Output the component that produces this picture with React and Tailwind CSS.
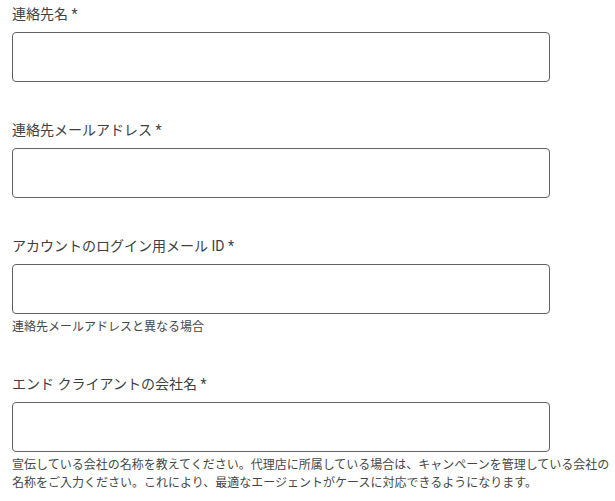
import React from "react";

const fields = [
  { label: "連絡先名 *" },
  { label: "連絡先メールアドレス *" },
  { label: "アカウントのログイン用メール ID *", helper: "連絡先メールアドレスと異なる場合" },
  {
    label: "エンド クライアントの会社名 *",
    helper:
      "宣伝している会社の名称を教えてください。代理店に所属している場合は、キャンペーンを管理している会社の名称をご入力ください。これにより、最適なエージェントがケースに対応できるようになります。",
  },
];

export default function App() {
  return (
    <div
      className="bg-white min-h-[501px] w-[615px] pl-[12px] pt-[4px] text-[#3c4043]"
      style={{ fontFamily: 'Roboto, "Noto Sans CJK JP", sans-serif' }}
    >
      {fields.map((f, i) => (
        <div key={i} className="flex flex-col mb-[38px]">
          <label className="text-[14px] leading-[20px] font-normal text-[#3c4043]">{f.label}</label>
          <div className="mt-[8px] h-[50px] w-[538px] rounded-[4px] border border-[#5f6368] bg-white" />
          {f.helper && (
            <div className="mt-[4px] text-[12px] leading-[18px] text-[#444746] w-[600px]">{f.helper}</div>
          )}
        </div>
      ))}
    </div>
  );
}
